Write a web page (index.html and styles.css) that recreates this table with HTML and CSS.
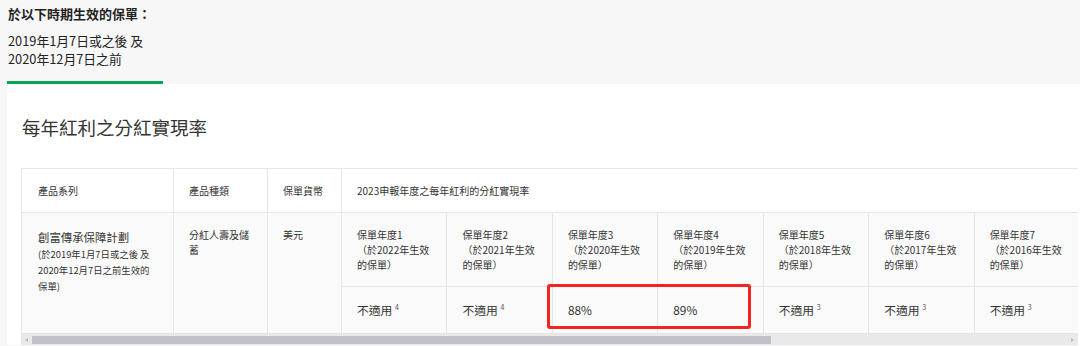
FILE: index.html
```html
<!DOCTYPE html>
<html lang="zh-Hant">
<head>
<meta charset="utf-8">
<title>每年紅利之分紅實現率</title>
<link rel="stylesheet" href="styles.css">
</head>
<body>
<div class="tab">
  <h4 class="tab-title">於以下時期生效的保單：</h4>
  <p class="tab-text">2019年1月7日或之後 及<br>2020年12月7日之前</p>
</div>
<section class="panel">
  <h2 class="panel-title">每年紅利之分紅實現率</h2>
  <div class="scroll-area">
    <div class="scroller">
      <table class="rates">
        <colgroup>
          <col class="c-series"><col class="c-type"><col class="c-cur">
          <col class="c-year"><col class="c-year"><col class="c-year"><col class="c-year">
          <col class="c-year"><col class="c-year"><col class="c-year"><col class="c-year">
          <col class="c-year"><col class="c-year"><col class="c-year">
        </colgroup>
        <thead>
          <tr class="head-row">
            <th>產品系列</th>
            <th>產品種類</th>
            <th>保單貨幣</th>
            <th colspan="11">2023申報年度之每年紅利的分紅實現率</th>
          </tr>
        </thead>
        <tbody>
          <tr class="sub-row">
            <td rowspan="2" class="series">
              <div class="series-name">創富傳承保障計劃</div>
              <div class="series-note">(於2019年1月7日或之後 及 2020年12月7日之前生效的保單)</div>
            </td>
            <td rowspan="2" class="plain">分紅人壽及儲蓄</td>
            <td rowspan="2" class="plain">美元</td>
            <td class="yr">保單年度1<br>（於2022年生效的保單）</td>
            <td class="yr">保單年度2<br>（於2021年生效的保單）</td>
            <td class="yr">保單年度3<br>（於2020年生效的保單）</td>
            <td class="yr">保單年度4<br>（於2019年生效的保單）</td>
            <td class="yr">保單年度5<br>（於2018年生效的保單）</td>
            <td class="yr">保單年度6<br>（於2017年生效的保單）</td>
            <td class="yr">保單年度7<br>（於2016年生效的保單）</td>
            <td class="yr">保單年度8<br>（於2015年生效的保單）</td>
            <td class="yr">保單年度9<br>（於2014年生效的保單）</td>
            <td class="yr">保單年度10<br>（於2013年生效的保單）</td>
            <td class="yr">保單年度11<br>（於2012年生效的保單）</td>
          </tr>
          <tr class="val-row">
            <td>不適用 <sup>4</sup></td>
            <td>不適用 <sup>4</sup></td>
            <td>88%</td>
            <td>89%</td>
            <td>不適用 <sup>3</sup></td>
            <td>不適用 <sup>3</sup></td>
            <td>不適用 <sup>3</sup></td>
            <td>不適用 <sup>3</sup></td>
            <td>不適用 <sup>3</sup></td>
            <td>不適用 <sup>3</sup></td>
            <td>不適用 <sup>3</sup></td>
          </tr>
        </tbody>
      </table>
    </div>
    <div class="highlight"></div>
    <div class="scrollbar">
      <span class="arrow arrow-left"></span>
      <div class="track"><div class="thumb"></div></div>
      <span class="arrow arrow-right"></span>
    </div>
  </div>
</section>
</body>
</html>
```
FILE: styles.css
```css
* { box-sizing: border-box; }

html, body {
  margin: 0;
  padding: 0;
}

body {
  background: #f7f7f8;
  font-family: "Noto Sans CJK TC", "Noto Sans", sans-serif;
  color: #333;
  overflow: hidden;
  width: 1080px;
  height: 346px;
}

.tab {
  margin-left: 7px;
  width: 156px;
  padding: 5px 0 13px 1px;
  border-bottom: 3px solid #0aa552;
}

.tab-title {
  margin: 0;
  font-size: 13px;
  line-height: 18px;
  font-weight: 700;
  color: #222;
}

.tab-text {
  margin: 9px 0 0;
  font-size: 12.8px;
  line-height: 18px;
  color: #222;
  white-space: nowrap;
}

.panel {
  background: #fff;
  margin-left: 7px;
  padding: 30px 0 0 14px;
}

.panel-title {
  margin: 0 0 28px 1px;
  font-size: 18.5px;
  line-height: 26px;
  font-weight: 400;
  color: #333;
}

.scroll-area {
  position: relative;
  width: 1057px;
}

.scroller {
  overflow: hidden;
}

.rates {
  border-collapse: collapse;
  table-layout: fixed;
  width: 1480px;
  font-size: 10px;
  color: #333;
}

.c-series { width: 152px; }
.c-type { width: 94px; }
.c-cur { width: 74px; }
.c-year { width: 105.45px; }

.rates th,
.rates td {
  border: 1px solid #e6e6e6;
  text-align: left;
  vertical-align: top;
  font-weight: 400;
  padding: 14px 15px;
  line-height: 15px;
}

.rates th:first-child {
  padding-left: 16px;
}

.head-row th {
  background: #fff;
}

.rates tbody td {
  background: #fafafa;
}

.rates td.series {
  padding: 15px 20px 14px 16px;
}

.series-name {
  font-size: 11.4px;
  line-height: 18px;
  color: #333;
}

.series-note {
  font-size: 9.4px;
  line-height: 16px;
  color: #333;
}

.plain {
  padding-left: 16px;
}

.val-row td {
  font-size: 11.8px;
  line-height: 17px;
  padding-top: 14px;
  padding-bottom: 15px;
  color: #333;
}

.val-row sup {
  font-size: 7px;
  color: #555;
  vertical-align: 5px;
  line-height: 0;
}

.highlight {
  position: absolute;
  left: 526px;
  top: 116px;
  width: 204px;
  height: 45px;
  border: 3px solid #f4241e;
  border-radius: 3px;
}

.scrollbar {
  display: flex;
  align-items: center;
  height: 11px;
  background: #e9e9eb;
}

.arrow {
  width: 11px;
  height: 11px;
  display: flex;
  align-items: center;
  justify-content: center;
  flex: none;
}

.arrow::before {
  content: "";
  border-top: 2.5px solid transparent;
  border-bottom: 2.5px solid transparent;
}

.arrow-left::before {
  border-right: 3px solid #b9b9be;
}

.arrow-right::before {
  border-left: 3px solid #b9b9be;
}

.track {
  flex: 1;
  height: 8px;
}

.thumb {
  width: 739px;
  height: 8px;
  background: #c1c1ca;
}
```
